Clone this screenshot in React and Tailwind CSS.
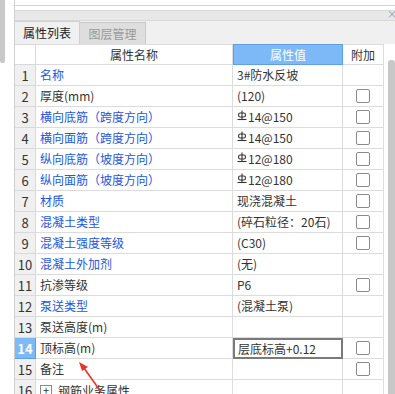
import React from "react";

const rows = [
  { n: 1, name: "名称", blue: true, value: "3#防水反坡", cb: false },
  { n: 2, name: "厚度(mm)", value: "(120)", cb: true },
  { n: 3, name: "横向底筋（跨度方向）", blue: true, value: "14@150", bar: true, cb: true },
  { n: 4, name: "横向面筋（跨度方向）", blue: true, value: "14@150", bar: true, cb: true },
  { n: 5, name: "纵向底筋（坡度方向）", blue: true, value: "12@180", bar: true, cb: true },
  { n: 6, name: "纵向面筋（坡度方向）", blue: true, value: "12@180", bar: true, cb: true },
  { n: 7, name: "材质", blue: true, value: "现浇混凝土", cb: true },
  { n: 8, name: "混凝土类型", blue: true, value: "(碎石粒径：20石)", cb: true },
  { n: 9, name: "混凝土强度等级", blue: true, value: "(C30)", cb: true },
  { n: 10, name: "混凝土外加剂", blue: true, value: "(无)", cb: false },
  { n: 11, name: "抗渗等级", value: "P6", cb: true },
  { n: 12, name: "泵送类型", blue: true, value: "(混凝土泵)", cb: false },
  { n: 13, name: "泵送高度(m)", value: "", cb: false },
  { n: 14, name: "顶标高(m)", value: "层底标高+0.12", cb: true, active: true },
  { n: 15, name: "备注", value: "", cb: true },
];

// HRB400 rebar grade mark
function RebarMark() {
  return (
    <svg width="10" height="11" viewBox="0 0 10 11" className="mr-[1px] -mt-[3px]">
      <path d="M5 0.5V9.5" stroke="#333" strokeWidth="1.1" fill="none" />
      <rect x="1.6" y="3" width="6.8" height="4" rx="1.6" stroke="#333" strokeWidth="1.1" fill="none" />
      <path d="M0.5 9.5H9.5" stroke="#333" strokeWidth="1.1" fill="none" />
    </svg>
  );
}

function Checkbox() {
  return <div className="h-[14px] w-[14px] rounded-[2px] border border-[#8a8a8a] bg-white" />;
}

function Row({ r }) {
  return (
    <>
      <div
        className={
          r.active
            ? "flex items-center justify-center border-b border-r border-[#5f9fe6] bg-[#7db8f7] text-[13px] font-bold text-white"
            : "flex items-center justify-center border-b border-r border-[#d9d9d9] bg-[#f0f0f0] text-[13px] text-[#333]"
        }
      >
        {r.n}
      </div>
      <div
        className={
          "flex items-center border-b border-r border-[#dcdcdc] pl-[4px] " +
          (r.blue ? "text-[#2456e6]" : "text-[#333]")
        }
      >
        {r.name}
      </div>
      <div
        className={
          r.active
            ? "flex items-center border-2 border-[#7a7a7a] pl-[3px] text-[#333]"
            : "flex items-center border-b border-r border-[#dcdcdc] pl-[4px] text-[#333]"
        }
      >
        {r.bar && <RebarMark />}
        {r.value}
      </div>
      <div className="flex items-center justify-center border-b border-r border-[#dcdcdc]">
        {r.cb && <Checkbox />}
      </div>
    </>
  );
}

export default function App() {
  return (
    <div
      className="relative flex h-[394px] w-[395px] overflow-hidden bg-white text-[12px] leading-none"
      style={{ fontFamily: '"Noto Sans CJK SC", "Noto Sans", sans-serif' }}
    >
      <div className="w-[14px] shrink-0">
        <div className="h-[63px] w-[5px] rounded-b-[2px] bg-[#c8c8c8]" />
      </div>

      <div className="flex min-w-0 flex-1 flex-col border-l border-[#d0d0d0]">
        <div className="h-[6px] shrink-0 border-b border-[#d4d4d4]" />
        <div className="h-[4px] shrink-0" />
        <div className="relative h-[11px] shrink-0 border-y border-[#d8d8d8] bg-[#e8e8e8]">
          <span className="absolute right-[-2px] top-[-2px] text-[10px] text-[#999]">×</span>
        </div>
        <div className="flex h-[23px] shrink-0 items-end bg-[#f0f0f0]">
          <div className="flex h-[23px] w-[65px] items-center justify-center border-r border-t border-[#d0d0d0] bg-[#f0f0f0] text-[12px] text-[#222]">
            属性列表
          </div>
          <div className="flex h-[22px] w-[66px] items-center justify-center border-r border-t border-[#c8c8c8] bg-[#dedede] text-[12px] text-[#999]">
            图层管理
          </div>
        </div>

        <div className="flex flex-1">
          <div className="grid w-[369px] shrink-0 grid-cols-[21px_197px_110px_41px] auto-rows-[21px] content-start">
            <div className="border-b border-r border-t border-[#d9d9d9] bg-white" />
            <div className="flex items-center justify-center border-b border-r border-t border-[#dcdcdc] text-[#333]">
              属性名称
            </div>
            <div className="flex items-center justify-center border border-[#5f9fe6] bg-[#7db8f7] text-white">
              属性值
            </div>
            <div className="flex items-center justify-center border-b border-r border-t border-[#dcdcdc] text-[#333]">
              附加
            </div>
            {rows.map((r) => (
              <Row key={r.n} r={r} />
            ))}
            <div className="flex items-center justify-center border-r border-[#d9d9d9] bg-[#f0f0f0] text-[13px] text-[#333]">
              16
            </div>
            <div className="flex items-center gap-[6px] border-r border-[#dcdcdc] pl-[4px] text-[#333]">
              <span className="flex h-[12px] w-[12px] items-center justify-center border border-[#8a8a8a] text-[11px] leading-none">
                +
              </span>
              钢筋业务属性
            </div>
            <div className="border-r border-[#dcdcdc]" />
            <div className="border-r border-[#dcdcdc]" />
          </div>
          <div className="flex flex-1 justify-end">
            <div className="mt-[16px] h-[340px] w-[7px] rounded-t-[3px] bg-[#c8c8c8]" />
          </div>
        </div>
      </div>

      <svg className="pointer-events-none absolute left-0 top-0" width="395" height="394">
        <path d="M101 392L84 368" stroke="#e8372a" strokeWidth="1.6" fill="none" />
        <path d="M79 362L88 367L82 371Z" fill="#e8372a" />
      </svg>
    </div>
  );
}
